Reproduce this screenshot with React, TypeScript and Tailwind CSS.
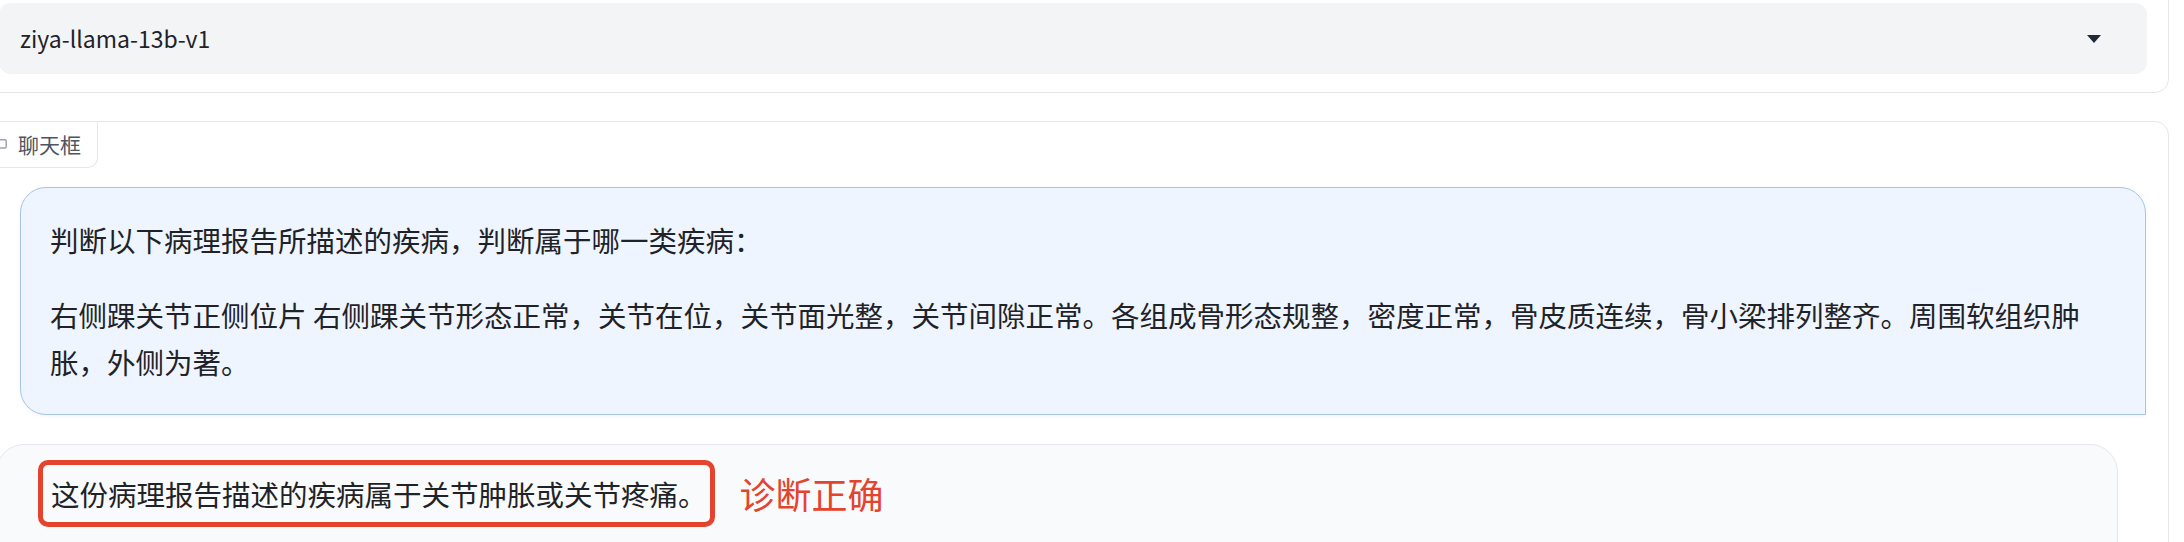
const cjk = { fontFamily: '"Noto Sans CJK SC", "Noto Sans", sans-serif' };

const Arrow = () => (
  <svg width="14" height="8" viewBox="0 0 14 8" className="shrink-0">
    <path d="M0 0 L14 0 L7 8 Z" fill="#1f2937" />
  </svg>
);

const ChatIcon = () => (
  <svg width="14" height="14" viewBox="0 0 24 24" fill="none" stroke="#9ca3af" strokeWidth="2.5" className="shrink-0">
    <path d="M21 15a2 2 0 0 1-2 2H7l-4 4V5a2 2 0 0 1 2-2h14a2 2 0 0 1 2 2z" />
  </svg>
);

export default function App() {
  return (
    <div
      className="w-[2184px] h-[542px] overflow-hidden bg-white text-[#1f2328]"
      style={cjk}
    >
      <div className="ml-[-20px] w-[2189px] flex flex-col">
        {/* model selector */}
        <div className="mt-[-17px] border border-gray-200 rounded-[14px] pt-[19px] pb-[18px] pl-[18px] pr-[21px]">
          <div className="h-[71px] rounded-[12px] bg-[#f3f4f6] flex items-center justify-between pl-[21px] pr-[46px]">
            <span className="text-[23px] leading-none">ziya-llama-13b-v1</span>
            <Arrow />
          </div>
        </div>

        {/* chatbot */}
        <div className="mt-[28px] h-[560px] border border-gray-200 rounded-[14px] flex flex-col items-start">
          <div className="h-[46px] w-[117px] border-r border-b border-gray-200 rounded-br-[10px] flex items-center gap-[10px] pl-[13px] text-[21px] text-[#4b5563]">
            <ChatIcon />
            <span>聊天框</span>
          </div>

          <div className="mt-[19px] ml-[39px] w-[2126px] self-start rounded-[26px] rounded-br-none border border-[#a9c5e5] bg-[#eef5fe] px-[29px] py-[28px] text-[28.5px] leading-[47.5px] shadow-[0_1px_4px_rgba(0,0,0,0.05)]">
            <p className="mb-[27px]">判断以下病理报告所描述的疾病，判断属于哪一类疾病：</p>
            <p>
              右侧踝关节正侧位片 右侧踝关节形态正常，关节在位，关节面光整，关节间隙正常。各组成骨形态规整，密度正常，骨皮质连续，骨小梁排列整齐。周围软组织肿胀，外侧为著。
            </p>
          </div>

          <div className="mt-[29px] ml-[15px] w-[2122px] h-[140px] rounded-[28px] rounded-bl-none border border-gray-200 bg-[#f9fafb] pt-[15px] pl-[41px] flex items-start">
            <div className="flex items-center">
              <div className="border-[5px] border-[#e4432d] rounded-[10px] pl-[8px] pr-[3px] py-[5px] text-[28.5px] leading-[47.5px]">
                这份病理报告描述的疾病属于关节肿胀或关节疼痛。
              </div>
              <span className="ml-[25px] text-[36px] leading-none text-[#e4432d]">诊断正确</span>
            </div>
          </div>
        </div>
      </div>
    </div>
  );
}
